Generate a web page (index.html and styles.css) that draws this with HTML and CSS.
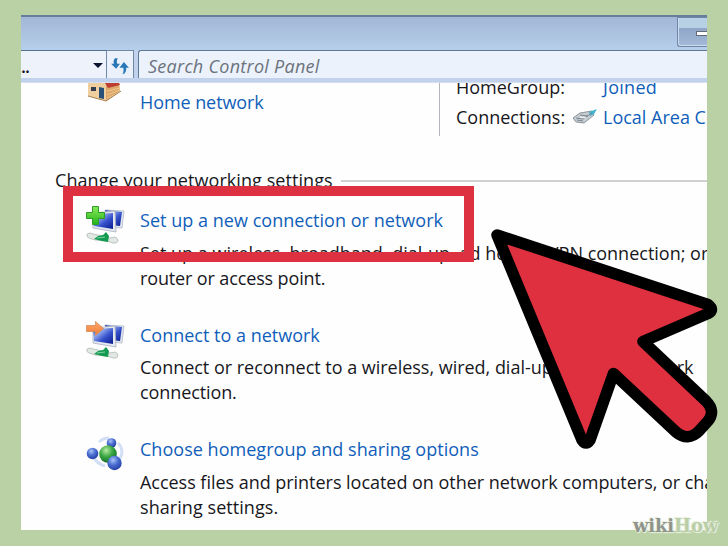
FILE: index.html
```html
<!DOCTYPE html>
<html lang="en">
<head>
<meta charset="utf-8">
<title>Network settings</title>
<link rel="stylesheet" href="styles.css">
</head>
<body>
<svg class="defs" width="0" height="0" aria-hidden="true">
  <defs>
    <linearGradient id="screen" x1="0" y1="0" x2="1" y2="1"><stop offset="0" stop-color="#1b35b4"/><stop offset=".3" stop-color="#8fa8ec"/><stop offset=".6" stop-color="#3550cc"/><stop offset="1" stop-color="#0a1b8c"/></linearGradient>
    <linearGradient id="plus" x1="0" y1="0" x2="0" y2="1"><stop offset="0" stop-color="#8bea5a"/><stop offset="1" stop-color="#22b41a"/></linearGradient>
    <linearGradient id="orange" x1="0" y1="0" x2="0" y2="1"><stop offset="0" stop-color="#ffa96a"/><stop offset="1" stop-color="#ee7a35"/></linearGradient>
    <radialGradient id="blueball" cx=".4" cy=".3" r=".7"><stop offset="0" stop-color="#a9c4f8"/><stop offset=".5" stop-color="#4c6ed0"/><stop offset="1" stop-color="#2440a6"/></radialGradient>
    <radialGradient id="greenball" cx=".4" cy=".3" r=".7"><stop offset="0" stop-color="#b6eca4"/><stop offset=".5" stop-color="#3da843"/><stop offset="1" stop-color="#157328"/></radialGradient>
    <g id="computers">
      <path d="M20 5l19 1-2 17-12-1z" fill="#dfe4ee" stroke="#b4bac9" stroke-width=".8"/>
      <path d="M20 5l17 2-2 14-9-1z" fill="url(#screen)"/>
      <path d="M8 8l22-2 1 21-23-4z" fill="#e4e8f0" stroke="#a9afbd" stroke-width=".8"/>
      <path d="M8 9l20-1v16L9 21z" fill="url(#screen)"/>
      <path d="M2 29q3-2 6 0l5 1 12 3 5-1q3 1 3 4-1 3-5 2l-6-2-12-1-6-2q-3-1-2-4z" fill="#e2e8e3" stroke="#a8b3ab" stroke-width=".7"/>
      <path d="M9 34l4-3 5-1 3-3 3 4-1 6-6-1z" fill="#159a51"/>
      <path d="M12 33l8-1" stroke="#7bd4a0"/>
    </g>
  </defs>
</svg>
<div class="stage">
  <div class="window">
    <div class="titlebar"><div class="minimize"><i></i></div></div>
    <div class="toolbar">
      <div class="address"><span>..</span><i class="caret"></i></div>
      <div class="refresh">
        <svg width="20" height="20" viewBox="0 0 18 18"><g fill="#2878b8"><path d="M4.500 2C3 4 3 5 3.500 7H1l4.500 4.500L9 7H6.500C6 5 6 4 7 2z"/><path d="M12.500 5.500L17 10.500H14.500c.3 3-.5 5-3.200 6 1-2 1-3.500.7-6H8.500z"/></g></svg>
      </div>
      <div class="search"><span class="t-search">Search Control Panel</span></div>
    </div>
    <div class="content">
      <div class="summary">
        <svg class="house" width="38" height="24" viewBox="0 0 38 24">
          <path d="M2 0h19v18L2 13z" fill="#efcf9e"/><path d="M20 0h13l1 8-14 10z" fill="#dca768"/><path d="M19 0h14l1 2-12 3z" fill="#bd3e32"/><path d="M21 8l13-3M21 12l13-5M21 15l9-4" stroke="#f3c98d"/><path d="M5 4h5v4H5z" fill="#333f50"/><path d="M13 4l5 1v11l-5-1z" fill="#285078"/><path d="M2 13l18 5 15-10" fill="none" stroke="#a5814d"/>
        </svg>
        <div class="profile"><a class="t-home">Home network</a></div>
        <div class="facts">
          <div class="fact"><span class="label">HomeGroup:</span><a class="t-joined">Joined</a></div>
          <div class="fact"><span class="label">Connections:</span>
            <svg class="plug" width="26" height="18" viewBox="0 0 26 18"><path d="M1 10l7-5 12-2 2 4-10 8-8-1z" fill="#c6cdd2" stroke="#8b959b"/><path d="M17 4l8-3-3 5-4 2z" fill="#42b2cc"/><path d="M4 10l7 1 9-6M8 7l8 1M5 12l6 1" stroke="#7b868e" fill="none"/><path d="M8 9l6 1" stroke="#fff"/></svg>
            <a class="t-lac">Local Area Connection</a></div>
        </div>
      </div>
      <div class="heading"><span class="t-head">Change your networking settings</span><i></i></div>
      <div class="item">
        <svg class="icon" width="42" height="42" viewBox="0 0 42 42"><use href="#computers"/><path d="M7.500 1.500h6v6h6v6h-6v6h-6v-6h-6v-6h6z" fill="url(#plus)" stroke="#2c9c26"/></svg>
        <div class="copy"><a class="t-a0">Set up a new connection or network</a>
          <p><span class="t-a1">Set up a wireless, broadband, dial-up, ad hoc, or VPN connection; or set</span><span class="t-a2">router or access point.</span></p></div>
      </div>
      <div class="item">
        <svg class="icon" width="42" height="42" viewBox="0 0 42 42"><use href="#computers"/><path d="M1.500 5.500h9v-4l8 7-8 7v-4h-9z" fill="url(#orange)" stroke="#d38a58" stroke-width=".8"/></svg>
        <div class="copy"><a class="t-b0">Connect to a network</a>
          <p><span class="t-b1">Connect or reconnect to a wireless, wired, dial-up, or VPN network</span><span class="t-b2">connection.</span></p></div>
      </div>
      <div class="item">
        <svg class="icon" width="42" height="42" viewBox="0 0 42 42"><path d="M8 22c3 6 7 9 12 10M33 9c5 5 5 12 1 17M14 8c3-3 6-4 10-4" fill="none" stroke="#d3dff5" stroke-width="3"/><circle cx="26.500" cy="9" r="4.800" fill="url(#blueball)"/><circle cx="7.500" cy="19.500" r="5.800" fill="url(#blueball)"/><circle cx="23" cy="20" r="8.800" fill="url(#greenball)"/><circle cx="29.500" cy="29" r="7.200" fill="url(#blueball)"/></svg>
        <div class="copy"><a class="t-c0">Choose homegroup and sharing options</a>
          <p><span class="t-c1">Access files and printers located on other network computers, or change</span><span class="t-c2">sharing settings.</span></p></div>
      </div>
    </div>
  </div>
  <div class="highlight"></div>
  <svg class="pointer" width="728" height="546" viewBox="0 0 728 546"><path d="M497 235L708 304.500Q715 310 708 313.500L643 341.500L706 401Q716 411 708 421L699 431Q688 442 676 432L613.500 373.500L590 440Q586 446 582 440Z" fill="#df3040" stroke="#000" stroke-width="11.500" stroke-linejoin="round"/></svg>
  <div class="brand"><span class="wiki">wiki</span><span class="how">How</span></div>
</div>
</body>
</html>
```
FILE: styles.css
```css
* { box-sizing: border-box; }
body { margin: 0; }
.defs { position: absolute; }
.stage { position: relative; width: 728px; height: 546px; overflow: hidden; background: #bad1a5; padding: 15px 21px 16px; font-family: "Open Sans", "Noto Sans", sans-serif; font-size: 18px; color: #17171c; }
.window { width: 686px; height: 515px; overflow: hidden; background: #fefefe; }
.titlebar { height: 35px; border-top: 2px solid #657f9b; background: linear-gradient(#a2b6d5, #b6cfeb); display: flex; justify-content: flex-end; }
.minimize { width: 30px; height: 30px; border: 1px solid #7185a8; border-right: 0; border-radius: 0 0 0 3px; background: linear-gradient(#b8d0e3 0 36%, #8fa6c9 37%, #a5bad9); box-shadow: inset 1px -1px #cbdced; padding: 13px 0 0 18px; }
.minimize i { display: block; width: 12px; height: 5px; background: #fff; border: 1px solid #626b7a; border-right: 0; }
.toolbar { height: 33px; display: flex; gap: 4px; background: #c3d2ec; padding-bottom: 4px; border-bottom: 1px solid #d6dff0; }
.address { display: flex; width: 86px; justify-content: space-between; align-items: center; border-top: 1px solid #56708f; border-right: 1px solid #7189a6; background: #eef3fb; padding: 2px 3px 0 0; }
.address span { font-weight: 600; letter-spacing: -1px; }
.caret { border: 5px solid transparent; border-top-color: #0b1230; border-bottom: 0; }
.refresh { width: 27px; margin-left: -4px; border: solid #6f88a6; border-width: 1px 1px 0 0; background: #eaf1fa; display: grid; place-items: center; padding-top: 2px; }
.search { flex: 1; border: 1px solid #5d7896; border-width: 1px 0 0 1px; border-radius: 3px 0 0 0; background: #ebf2fb; padding-left: 9px; line-height: 31px; font-style: italic; color: #6c737d; letter-spacing: .27px; }
.content span, .content a, .t-search { white-space: nowrap; }
a { color: #105eba; }
.summary { display: flex; height: 53px; overflow: hidden; }
.house { margin-left: 65px; flex: none; }
.profile { flex: none; width: 316px; padding: 6px 0 0 16px; line-height: 26px; border-right: 1px solid #b4b4bc; }
.facts { flex: none; padding-left: 16px; margin-top: -11px; }
.fact { display: flex; height: 30px; line-height: 30px; align-items: center; }
.label { width: 147px; flex: none; }
.plug { margin-left: -31px; margin-right: 5px; flex: none; }
.heading { display: flex; align-items: center; gap: 8px; margin: 31px 0 0 34px; height: 26px; line-height: 26px; }
.heading i { flex: 1; height: 2px; margin-top: 2px; background: #d0d0d3; }
.item { display: flex; height: 114.500px; padding-left: 64px; }
.heading + .item { margin-top: 11px; }
.icon { flex: none; margin-top: 1px; }
.copy { padding-left: 13px; }
.copy a { display: block; line-height: 26px; margin-top: 3px; }
.copy p { margin: 7.500px 0 0; line-height: 25px; }
.copy p span { display: block; }
.t-home { letter-spacing: -.08px; }
.t-joined { letter-spacing: .3px; }
.t-head { letter-spacing: .07px; }
.t-a0, .t-c0 { letter-spacing: .03px; }
.t-a2 { letter-spacing: -.13px; }
.t-b1 { letter-spacing: -.02px; }
.t-b2 { letter-spacing: -.1px; }
.t-c1 { letter-spacing: -.03px; }
.t-c2 { letter-spacing: .06px; }
.highlight { position: absolute; left: 63px; top: 186px; width: 411px; height: 76px; border: 10px solid #dd3141; }
.pointer { position: absolute; left: 0; top: 0; }
.brand { position: absolute; left: 633px; top: 514px; font: bold 18px/24px "DejaVu Serif", serif; letter-spacing: -.15px; text-shadow: 0 0 2px #f2f6ec, 1px 1px 1px #e6eedd, -1px -1px 1px #e6eedd; }
.wiki { color: #8f948a; }
.how { color: #b9cda6; }
```
